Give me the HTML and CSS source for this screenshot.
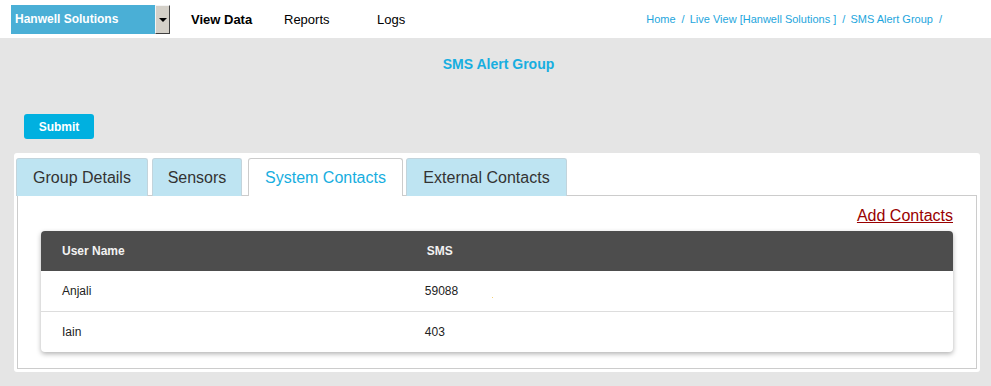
FILE: index.html
```html
<!DOCTYPE html>
<html>
<head>
    <title>SMS Alert Group</title>
    <link rel="stylesheet" href="styles.css">
</head>
<body>
    <div class="topbar">
        <div class="site-select">
            <span class="site-name">Hanwell Solutions</span>
            <span class="site-arrow"></span>
        </div>
        <a class="nav-link active" href="#">View Data</a>
        <a class="nav-link" href="#">Reports</a>
        <a class="nav-link" href="#">Logs</a>
        <div class="breadcrumb">
            <a href="#">Home</a><span class="sep">/</span>
            <a href="#">Live View [Hanwell Solutions ]</a><span class="sep">/</span>
            <a href="#">SMS Alert Group</a><span class="sep">/</span>
        </div>
    </div>

    <div class="page">
        <h1 class="page-title">SMS Alert Group</h1>
        <button class="submit-btn" type="submit">Submit</button>

        <div class="panel">
            <ul class="tabs">
                <li class="tab tab-group">Group Details</li>
                <li class="tab tab-sensors">Sensors</li>
                <li class="tab tab-system active">System Contacts</li>
                <li class="tab tab-external">External Contacts</li>
            </ul>
            <div class="tab-content">
                <div class="actions">
                    <a class="add-link" href="#">Add Contacts</a>
                </div>
                <table class="contacts">
                    <thead>
                        <tr>
                            <th class="col-name">User Name</th>
                            <th>SMS</th>
                        </tr>
                    </thead>
                    <tbody>
                        <tr>
                            <td>Anjali</td>
                            <td class="sms">59088<span class="dot"></span></td>
                        </tr>
                        <tr>
                            <td>Iain</td>
                            <td class="sms">403</td>
                        </tr>
                    </tbody>
                </table>
            </div>
        </div>
    </div>
</body>
</html>
```

FILE: styles.css
```css
/* base */
body {
    margin: 0;
    background-color: #e5e5e5;
    font-family: "Liberation Sans", Arial, sans-serif;
    color: #222;
}

a {
    text-decoration: none;
}

/* top bar */
.topbar {
    display: flex;
    align-items: center;
    height: 38px;
    padding-left: 11px;
    background-color: #fff;
}

.site-select {
    display: flex;
    width: 159px;
    height: 29px;
    margin-top: 1px;
}

.site-name {
    flex: 1;
    padding-left: 4px;
    line-height: 29px;
    background-color: #4aafd6;
    color: #fff;
    font-size: 12px;
    font-weight: bold;
}

.site-arrow {
    position: relative;
    width: 15px;
    box-sizing: border-box;
    background-color: #d4d0c8;
    border-top: 1px solid #f4f4f4;
    border-left: 1px solid #f4f4f4;
    border-right: 1px solid #404040;
    border-bottom: 1px solid #404040;
}

.site-arrow::after {
    content: "";
    position: absolute;
    left: 3px;
    top: 12px;
    border-left: 4px solid transparent;
    border-right: 4px solid transparent;
    border-top: 4px solid #000;
}

.nav-link {
    width: 93px;
    color: #000;
    font-size: 13px;
}

.nav-link:first-of-type {
    margin-left: 21px;
}

.nav-link.active {
    font-weight: bold;
}

.breadcrumb {
    margin-left: auto;
    margin-right: 47px;
    font-size: 11px;
    color: #1ea6dd;
}

.breadcrumb a {
    color: #1ea6dd;
}

.breadcrumb .sep {
    margin: 0 2px 0 6px;
}

/* page */
.page {
    padding: 0 11px 14px 14px;
}

.page-title {
    margin: 0;
    padding-top: 19px;
    padding-left: 3px;
    text-align: center;
    font-size: 14px;
    line-height: 15px;
    color: #17aee0;
}

.submit-btn {
    display: block;
    width: 70px;
    height: 25px;
    margin: 42px 0 14px 10px;
    padding: 0;
    border: none;
    border-radius: 3px;
    background-color: #00b0e0;
    color: #fff;
    font-family: "Liberation Sans", Arial, sans-serif;
    font-size: 12px;
    font-weight: bold;
}

/* panel and tabs */
.panel {
    background-color: #fff;
    border-radius: 3px;
    padding: 5px 3px 3px 3px;
}

.tabs {
    display: flex;
    margin: 0 0 0 -1px;
    padding: 0;
    list-style: none;
}

.tab {
    box-sizing: border-box;
    height: 38px;
    line-height: 38px;
    margin-bottom: -1px;
    text-align: center;
    background-color: #bee4f2;
    border: 1px solid #c2d4dc;
    border-bottom: none;
    border-radius: 3px 3px 0 0;
    font-size: 16px;
    color: #333;
}

.tab-group {
    width: 132px;
    margin-right: 4px;
}

.tab-sensors {
    width: 90px;
    margin-right: 6px;
}

.tab-system {
    width: 155px;
    margin-right: 3px;
}

.tab-external {
    width: 161px;
}

.tab.active {
    position: relative;
    background-color: #fff;
    border-color: #ccc;
    color: #17aee0;
}

.tab-content {
    border: 1px solid #ccc;
    padding: 11px 23px 16px 23px;
}

.actions {
    text-align: right;
    margin-bottom: 6px;
}

.add-link {
    color: #990000;
    font-size: 16px;
    text-decoration: underline;
}

/* contacts table */
.contacts {
    width: 100%;
    border-collapse: separate;
    border-spacing: 0;
    border-radius: 4px;
    box-shadow: 0 2px 5px rgba(0, 0, 0, 0.3);
    font-size: 12px;
}

.contacts th {
    height: 40px;
    padding: 0 0 0 21px;
    background-color: #4d4d4d;
    color: #f2f2f2;
    text-align: left;
}

.contacts th:first-child {
    border-top-left-radius: 4px;
}

.contacts th:last-child {
    border-top-right-radius: 4px;
}

.contacts .col-name {
    width: 40%;
}

.contacts td {
    height: 40px;
    padding: 0 0 0 21px;
    color: #222;
}

.contacts tbody tr:first-child td {
    border-bottom: 1px solid #ddd;
}

.contacts td.sms {
    padding-left: 19px;
}

.dot {
    display: inline-block;
    width: 1px;
    height: 1px;
    margin-left: 34px;
    vertical-align: -3px;
    background-color: #f5d27a;
}
```
